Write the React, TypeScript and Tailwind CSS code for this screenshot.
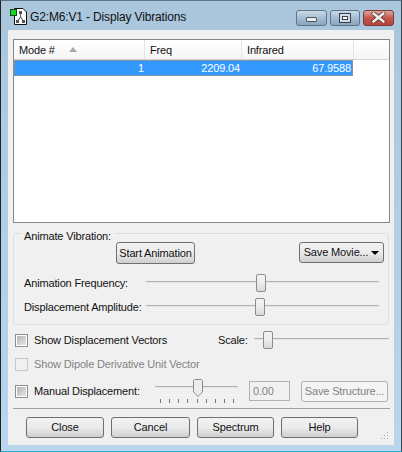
const FONT = "font-['Liberation_Sans',sans-serif]";

function CaptionButton({ kind }: { kind: "min" | "max" | "close" }) {
  const face =
    kind === "close"
      ? "w-[31px] border-[#7a3a36] bg-gradient-to-b from-[#dba69f] via-[#c4564c] to-[#b8443a]"
      : kind === "min"
        ? "w-[31px] border-[#5f7488] bg-gradient-to-b from-[#c9d9e7] via-[#a6bdd2] to-[#8aa5bd]"
        : "w-[30px] border-[#5f7488] bg-gradient-to-b from-[#c9d9e7] via-[#a6bdd2] to-[#8aa5bd]";
  return (
    <div className={`flex h-[16px] items-center justify-center rounded-[3px] border ${face}`}>
      {kind === "min" && <div className="mt-[4px] h-[5px] w-[11px] rounded-[1px] border border-[#4a5560] bg-[#e8edf1]" />}
      {kind === "max" && (
        <div className="flex h-[10px] w-[12px] items-center justify-center border border-[#39424c] bg-[#cfdbe6]">
          <div className="h-[4px] w-[6px] border border-[#39424c] bg-white" />
        </div>
      )}
      {kind === "close" && (
        <svg width="15" height="11" viewBox="0 0 15 11">
          <path d="M2.5 1.5 L12.5 9.5 M12.5 1.5 L2.5 9.5" stroke="#4a2a28" strokeWidth="4" strokeLinecap="round" />
          <path d="M2.5 1.5 L12.5 9.5 M12.5 1.5 L2.5 9.5" stroke="#f3f1f0" strokeWidth="2.6" strokeLinecap="round" />
        </svg>
      )}
    </div>
  );
}

function Button({ label, w, h = 21, disabled, caret }: { label: string; w: number; h?: number; disabled?: boolean; caret?: boolean }) {
  return (
    <div
      style={{ width: w, height: h }}
      className={`flex items-center justify-center gap-[3px] whitespace-nowrap rounded-[3px] border pb-[1px] ${
        disabled
          ? "border-[#adb2b5] bg-[#f4f4f4] text-[#838383]"
          : "border-[#707070] bg-gradient-to-b from-[#f2f2f2] via-[#ebebeb] to-[#cfcfcf] text-[#111]"
      }`}
    >
      <span>{label}</span>
      {caret && <span className="mt-[1px] h-0 w-0 border-x-[4px] border-t-[4px] border-x-transparent border-t-black" />}
    </div>
  );
}

function Slider({ w, thumb, ticks }: { w: number; thumb: number; ticks?: boolean }) {
  return (
    <div style={{ width: w }} className="relative h-[18px] shrink-0">
      <div className="absolute inset-x-0 top-[7px] h-[2px] rounded-[1px] border-t border-[#b0b0b0] bg-[#e4e4e4]" />
      {ticks ? (
        <svg width="10" height="18" viewBox="0 0 10 18" style={{ left: thumb }} className="absolute top-0">
          <path d="M1.5 0.5 H8.5 L9.5 1.5 V13 L5 17.5 L0.5 13 V1.5 Z" fill="#ececec" stroke="#8c8c8c" />
        </svg>
      ) : (
        <div
          style={{ left: thumb }}
          className="absolute top-0 h-[18px] w-[10px] rounded-[2px] border border-[#8c8c8c] bg-gradient-to-b from-[#f4f4f4] via-[#ececec] to-[#d8d8d8]"
        />
      )}
      {ticks && (
        <div className="absolute left-[5px] right-[4px] top-[20px] flex justify-between">
          {Array.from({ length: 9 }).map((_, i) => (
            <div key={i} className="h-[4px] w-px bg-[#777]" />
          ))}
        </div>
      )}
    </div>
  );
}

function Checkbox({ disabled }: { disabled?: boolean }) {
  return (
    <div className={`flex h-[13px] w-[13px] shrink-0 items-center justify-center border ${disabled ? "border-[#c6c6c6] bg-[#f0f0f0]" : "border-[#8e8f8f] bg-white"}`}>
      {!disabled && <div className="h-[9px] w-[9px] bg-gradient-to-br from-[#b5b5b5] to-[#e6e6e6]" />}
    </div>
  );
}

export default function App() {
  return (
    <div className={`${FONT} flex h-[452px] w-[402px] flex-col overflow-hidden border border-b-[#1fb6d6] border-l-[#222] border-r-[#3d4a55] border-t-[#5d7488] bg-gradient-to-b from-[#a9c6dc] to-[#bad6ee] text-[11px] leading-[14px] tracking-[-0.15px] text-[#111]`}>
      <div className="flex h-[29px] shrink-0 items-center pl-[9px] pr-[7px] pt-[4px]">
        <svg width="17" height="17" viewBox="0 0 17 17" className="mt-[-2px] shrink-0">
          <path d="M4.5 0.5 H13 L16.5 4 V16.5 H4.5 Z" fill="#fff" stroke="#111" />
          <rect x="0.5" y="1.5" width="6" height="6" fill="#19d327" stroke="#0a4a10" />
          <path d="M10.5 4.5 V9 L7.5 13 M10.5 9 L13.5 13" stroke="#6a6a6a" strokeWidth="1.2" fill="none" />
          <rect x="9" y="3" width="3" height="3" fill="#555" />
          <rect x="6" y="12" width="3" height="3" fill="#555" />
          <rect x="12" y="12" width="3" height="3" fill="#555" />
        </svg>
        <span className="ml-[3px] mt-[-1px] text-[12px] tracking-[-0.15px]">G2:M6:V1 - Display Vibrations</span>
        <div className="ml-auto flex gap-[3px]">
          <CaptionButton kind="min" />
          <CaptionButton kind="max" />
          <CaptionButton kind="close" />
        </div>
      </div>

      <div className="mx-[7px] flex h-[415px] flex-col bg-[#f0f0f0] px-[5px] pt-[9px]">
        <div className="h-[184px] w-[377px] shrink-0 border border-[#828790] bg-white">
          <div className="flex h-[20px] border-b border-[#d5d5d5] bg-gradient-to-b from-white to-[#f5f5f5]">
            <div className="flex w-[131px] items-center border-r border-[#e3e5e7] pl-[5px]">
              Mode #
              <span className="ml-[14px] h-0 w-0 border-x-[4px] border-b-[5px] border-x-transparent border-b-[#a9a9a9]" />
            </div>
            <div className="flex w-[97px] items-center border-r border-[#e3e5e7] pl-[5px]">Freq</div>
            <div className="flex w-[112px] items-center border-r border-[#e3e5e7] pl-[5px]">Infrared</div>
          </div>
          <div className="flex h-[16px] w-[339px] items-center border border-dotted border-[#c98a50] bg-[#3399ff] text-white">
            <div className="w-[130px] pr-[1px] text-right">1</div>
            <div className="w-[96px] pr-[1px] text-right">2209.04</div>
            <div className="w-[111px] pr-[1px] text-right">67.9588</div>
          </div>
        </div>

        <div className="relative mt-[10px] flex h-[92px] w-[376px] shrink-0 flex-col rounded-[3px] border border-[#dcdfe2] pl-[10px] pr-[4px] pt-[8px]">
          <span className="absolute left-[7px] top-[-5px] bg-[#f0f0f0] px-[3px]">Animate Vibration:</span>
          <div className="flex h-[22px] items-start justify-between">
            <div className="ml-[92px]">
              <Button label="Start Animation" w={79} h={22} />
            </div>
            <Button label="Save Movie..." w={85} h={21} caret />
          </div>
          <div className="mt-[10px] flex h-[18px] items-center">
            <span className="mt-[-1px] w-[122px] shrink-0">Animation Frequency:</span>
            <Slider w={233} thumb={110} />
          </div>
          <div className="mt-[6px] flex h-[18px] items-center">
            <span className="mt-[-1px] w-[122px] shrink-0">Displacement Amplitude:</span>
            <Slider w={233} thumb={109} />
          </div>
        </div>

        <div className="mt-[6px] flex h-[18px] w-[377px] shrink-0 items-center pl-[2px]">
          <Checkbox />
          <span className="ml-[6px] w-[184px]">Show Displacement Vectors</span>
          <span className="w-[36px]">Scale:</span>
          <Slider w={135} thumb={9} />
        </div>

        <div className="mt-[8px] flex h-[14px] shrink-0 items-center pl-[2px] text-[#838383]">
          <Checkbox disabled />
          <span className="ml-[6px]">Show Dipole Derivative Unit Vector</span>
        </div>

        <div className="mt-[9px] flex h-[22px] w-[377px] shrink-0 items-center pl-[2px]">
          <Checkbox />
          <span className="ml-[6px] mt-[-1px] w-[121px]">Manual Displacement:</span>
          <div className="mb-[6px]">
            <Slider w={83} thumb={38} ticks />
          </div>
          <div className="ml-[11px] flex h-[20px] w-[41px] shrink-0 items-center border border-[#adb2b5] pl-[3px] text-[#838383]">0.00</div>
          <div className="ml-[11px]">
            <Button label="Save Structure..." w={87} disabled />
          </div>
        </div>

        <div className="mt-[6px] h-px w-[377px] shrink-0 bg-[#a0a0a0]" />

        <div className="relative mt-[8px] flex h-[21px] w-[377px] shrink-0 gap-[7px] pl-[13px]">
          <Button label="Close" w={78} />
          <Button label="Cancel" w={79} />
          <Button label="Spectrum" w={77} />
          <Button label="Help" w={77} />
          <div className="absolute bottom-[-1px] right-[1px] text-[0px]">
            <svg width="8" height="7" viewBox="0 0 8 7">
              <path d="M6 0h1v1H6zM3 3h1v1H3zM6 3h1v1H6zM0 6h1v1H0zM3 6h1v1H3zM6 6h1v1H6z" fill="#a8a8a8" />
            </svg>
          </div>
        </div>
      </div>
    </div>
  );
}
